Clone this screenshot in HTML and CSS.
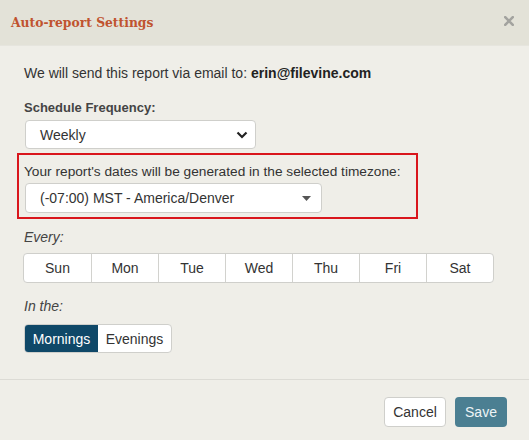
FILE: index.html
```html
<!DOCTYPE html>
<html>
<head>
<meta charset="utf-8">
<link rel="stylesheet" href="styles.css">
</head>
<body>
<div class="modal">
  <div class="header">
    <div class="title">Auto-report Settings</div>
    <svg class="close" width="10" height="10" viewBox="0 0 10 10"><path d="M1.2 1.2 L8.8 8.8 M8.8 1.2 L1.2 8.8" stroke="#a3a39f" stroke-width="2.6" stroke-linecap="round"/></svg>
  </div>
  <div class="content">
    <div class="intro">We will send this report via email to: <b>erin@filevine.com</b></div>
    <div class="label-bold">Schedule Frequency:</div>
    <div class="select freq">
      <span>Weekly</span>
      <svg width="12" height="8" viewBox="0 0 12 8"><path d="M1.5 1.5 L6 6 L10.5 1.5" fill="none" stroke="#222" stroke-width="2.2"/></svg>
    </div>
    <div class="highlight">
      <div class="tz-label">Your report's dates will be generated in the selected timezone:</div>
      <div class="select tz">
        <span>(-07:00) MST - America/Denver</span>
        <svg width="9" height="5" viewBox="0 0 9 5"><path d="M0 0 H9 L4.5 5 Z" fill="#555"/></svg>
      </div>
    </div>
    <div class="label-it">Every:</div>
    <div class="days">
      <div class="day">Sun</div>
      <div class="day">Mon</div>
      <div class="day">Tue</div>
      <div class="day">Wed</div>
      <div class="day">Thu</div>
      <div class="day">Fri</div>
      <div class="day">Sat</div>
    </div>
    <div class="label-it">In the:</div>
    <div class="toggle">
      <div class="opt active">Mornings</div>
      <div class="opt">Evenings</div>
    </div>
  </div>
  <div class="footer">
    <div class="btn cancel">Cancel</div>
    <div class="btn save">Save</div>
  </div>
</div>
</body>
</html>
```
FILE: styles.css
```css
* { box-sizing: border-box; }
html, body { margin: 0; padding: 0; }
body {
  width: 529px;
  height: 440px;
  background: #efeee8;
  font-family: "Liberation Sans", Arial, sans-serif;
  color: #333;
  overflow: hidden;
}
.modal { width: 529px; height: 440px; background: #efeee8; }
.header {
  height: 46px;
  background: #e3e2d8;
  display: flex;
  align-items: center;
  justify-content: space-between;
  padding: 0 15px 0 11px;
  border-bottom: 1px solid #e6e5de;
}
.title {
  font-family: "DejaVu Serif Condensed", "DejaVu Serif", Georgia, serif;
  font-weight: bold;
  font-size: 13.7px;
  color: #c0532f;
  margin-top: -2px;
}
.close {
  display: block;
  margin-top: -4px;
}
.content {
  padding: 17px 24px 26px 24px;
}
.intro {
  font-size: 14px;
  line-height: 20px;
  color: #333;
}
.intro b { color: #222; }
.label-bold {
  margin-top: 16px;
  font-size: 13px;
  font-weight: bold;
  line-height: 18px;
  color: #444;
}
.select {
  background: #fff;
  border: 1px solid #cfcfcb;
  border-radius: 4px;
  display: flex;
  align-items: center;
  justify-content: space-between;
  font-size: 14px;
  color: #333;
}
.freq {
  margin-top: 3px;
  margin-left: 1px;
  width: 231px;
  height: 29px;
  padding: 0 7px 0 14px;
}
.highlight {
  margin: 4px 0 0 -7px;
  width: 401px;
  height: 66px;
  border: 2px solid #d9161c;
  padding: 8px 0 0 5px;
}
.tz-label {
  font-size: 13.7px;
  line-height: 18px;
  color: #333;
}
.tz {
  margin-top: 2px;
  margin-left: 1px;
  width: 297px;
  height: 30px;
  padding: 0 10px 0 14px;
}
.label-it {
  font-style: italic;
  font-size: 14px;
  line-height: 18px;
  color: #444;
  margin-top: 9px;
}
.days {
  margin: 7px 0 0 -1px;
  width: 471px;
  height: 30px;
  display: grid;
  grid-template-columns: repeat(7, 1fr);
  background: #fff;
  border: 1px solid #cfcfcb;
  border-radius: 4px;
}
.day {
  display: flex;
  align-items: center;
  justify-content: center;
  font-size: 14px;
  color: #333;
  border-left: 1px solid #d2d2ce;
}
.day:first-child { border-left: none; }
.days + .label-it { margin-top: 14px; }
.toggle {
  margin-top: 9px;
  display: flex;
  width: 148px;
  height: 29px;
  border: 1px solid #cfcfcb;
  border-radius: 4px;
  background: #fff;
  overflow: hidden;
}
.opt {
  flex: 1;
  display: flex;
  align-items: center;
  justify-content: center;
  font-size: 14px;
  color: #333;
}
.opt.active {
  background: #0f4868;
  color: #fff;
}
.footer {
  border-top: 1px solid #dcdbd5;
  display: flex;
  justify-content: flex-end;
  gap: 9px;
  padding: 17px 22px 0 0;
}
.btn {
  height: 30px;
  display: flex;
  align-items: center;
  justify-content: center;
  font-size: 14px;
  border-radius: 4px;
}
.cancel {
  width: 62px;
  background: #fff;
  border: 1px solid #cfcfcb;
  color: #333;
}
.save {
  width: 52px;
  background: #4b7f92;
  color: #eef4f6;
}
```
